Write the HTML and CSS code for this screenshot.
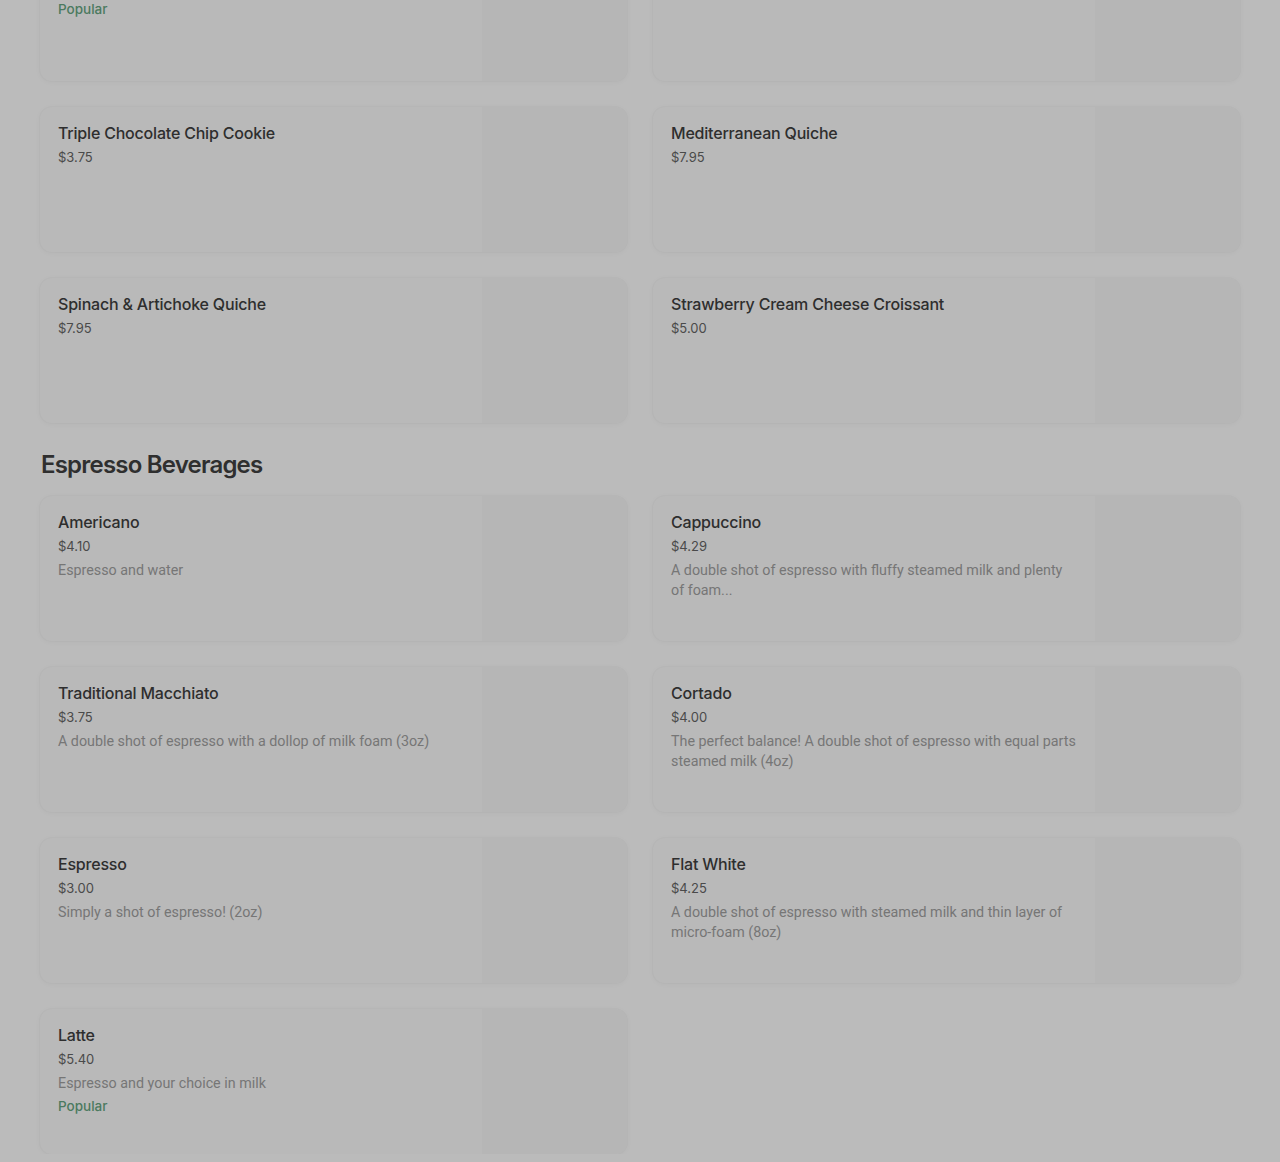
FILE: index.html
```html
<!DOCTYPE html>
<html lang="en">
<head>
    <meta charset="UTF-8">
    <meta name="viewport" content="width=device-width, initial-scale=1.0">
    <title>Menu</title>
    <link rel="stylesheet" href="styles.css">
</head>
<body>
    <div class="menu">
        <div class="item-grid">
            <div class="item-card">
                <div class="item-info">
                    <div class="item-name">Chocolate Croissant</div>
                    <div class="item-price">$4.50</div>
                    <div class="item-tag">Popular</div>
                </div>
                <div class="item-thumb"></div>
            </div>
            <div class="item-card">
                <div class="item-info">
                    <div class="item-name">Banana Nut Muffin</div>
                    <div class="item-price">$3.95</div>
                </div>
                <div class="item-thumb"></div>
            </div>
            <div class="item-card">
                <div class="item-info">
                    <div class="item-name">Triple Chocolate Chip Cookie</div>
                    <div class="item-price">$3.75</div>
                </div>
                <div class="item-thumb"></div>
            </div>
            <div class="item-card">
                <div class="item-info">
                    <div class="item-name">Mediterranean Quiche</div>
                    <div class="item-price">$7.95</div>
                </div>
                <div class="item-thumb"></div>
            </div>
            <div class="item-card">
                <div class="item-info">
                    <div class="item-name">Spinach &amp; Artichoke Quiche</div>
                    <div class="item-price">$7.95</div>
                </div>
                <div class="item-thumb"></div>
            </div>
            <div class="item-card">
                <div class="item-info">
                    <div class="item-name">Strawberry Cream Cheese Croissant</div>
                    <div class="item-price">$5.00</div>
                </div>
                <div class="item-thumb"></div>
            </div>
        </div>

        <h2 class="section-title">Espresso Beverages</h2>
        <div class="item-grid">
            <div class="item-card">
                <div class="item-info">
                    <div class="item-name">Americano</div>
                    <div class="item-price">$4.10</div>
                    <div class="item-desc">Espresso and water</div>
                </div>
                <div class="item-thumb"></div>
            </div>
            <div class="item-card">
                <div class="item-info">
                    <div class="item-name">Cappuccino</div>
                    <div class="item-price">$4.29</div>
                    <div class="item-desc">A double shot of espresso with fluffy steamed milk and plenty of foam...</div>
                </div>
                <div class="item-thumb"></div>
            </div>
            <div class="item-card">
                <div class="item-info">
                    <div class="item-name">Traditional Macchiato</div>
                    <div class="item-price">$3.75</div>
                    <div class="item-desc">A double shot of espresso with a dollop of milk foam (3oz)</div>
                </div>
                <div class="item-thumb"></div>
            </div>
            <div class="item-card">
                <div class="item-info">
                    <div class="item-name">Cortado</div>
                    <div class="item-price">$4.00</div>
                    <div class="item-desc">The perfect balance! A double shot of espresso with equal parts steamed milk (4oz)</div>
                </div>
                <div class="item-thumb"></div>
            </div>
            <div class="item-card">
                <div class="item-info">
                    <div class="item-name">Espresso</div>
                    <div class="item-price">$3.00</div>
                    <div class="item-desc">Simply a shot of espresso! (2oz)</div>
                </div>
                <div class="item-thumb"></div>
            </div>
            <div class="item-card">
                <div class="item-info">
                    <div class="item-name">Flat White</div>
                    <div class="item-price">$4.25</div>
                    <div class="item-desc">A double shot of espresso with steamed milk and thin layer of micro-foam (8oz)</div>
                </div>
                <div class="item-thumb"></div>
            </div>
            <div class="item-card">
                <div class="item-info">
                    <div class="item-name">Latte</div>
                    <div class="item-price">$5.40</div>
                    <div class="item-desc">Espresso and your choice in milk</div>
                    <div class="item-tag">Popular</div>
                </div>
                <div class="item-thumb"></div>
            </div>
        </div>
    </div>
</body>
</html>
```

FILE: styles.css
```css
body {
    margin: 0;
    background-color: #bbbbbb;
    font-family: Inter, "Noto Sans", sans-serif;
    color: #2e2e2e;
    overflow: hidden;
}
.menu {
    margin-top: -64px;
    padding: 0 40px;
}
.item-grid {
    display: grid;
    grid-template-columns: 1fr 1fr;
    column-gap: 26px;
    row-gap: 26px;
}
.section-title {
    margin: 26px 0 15px 1px;
    font-size: 24px;
    line-height: 32px;
    font-weight: 600;
    letter-spacing: -0.8px;
    color: #2f2f2f;
}
.item-card {
    display: flex;
    height: 145px;
    border-radius: 12px;
    background-color: #b9b9b9;
    box-shadow: 0 0 0 1px rgba(0, 0, 0, 0.015), 0 1px 6px rgba(0, 0, 0, 0.035);
    overflow: hidden;
}
.item-info {
    flex: 1;
    padding: 16px 10px 16px 18px;
    min-width: 0;
}
.item-thumb {
    width: 145px;
    flex-shrink: 0;
    background-color: #b6b6b6;
}
.item-name {
    font-size: 16px;
    line-height: 20px;
    font-weight: 500;
    letter-spacing: -0.2px;
    color: #2e2e2e;
}
.item-price {
    margin-top: 4px;
    font-size: 13px;
    line-height: 20px;
    color: #4a4a4a;
}
.item-desc {
    margin-top: 4px;
    max-width: 406px;
    font-family: Roboto, "Noto Sans", sans-serif;
    font-size: 14.3px;
    line-height: 20px;
    color: #767676;
}
.item-tag {
    margin-top: 3px;
    font-size: 13.5px;
    line-height: 20px;
    font-weight: 500;
    color: #4b7a5f;
}
```
